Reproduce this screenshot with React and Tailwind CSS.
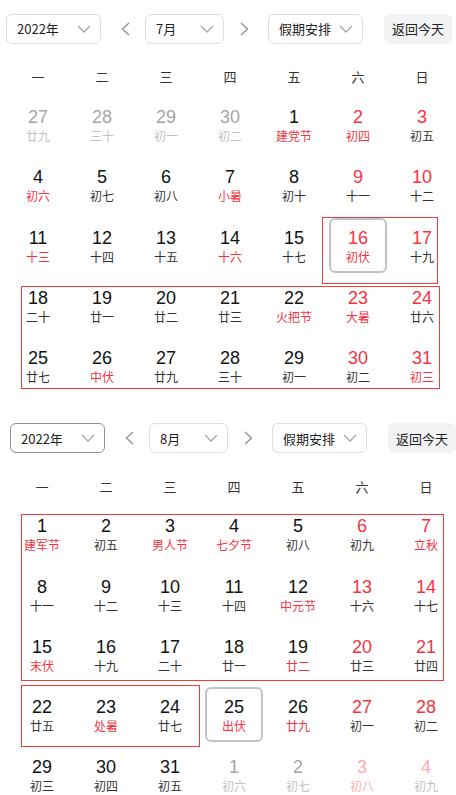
import React from 'react';

const CJK = "font-['Noto_Sans_CJK_SC',sans-serif]";
const NUM = "font-['Liberation_Sans',Arial,sans-serif]";

const numColor = {
  k: 'text-[#111]',
  r: 'text-[#f5333f]',
  g: 'text-[#a6a6a6]',
  p: 'text-[#ffabab]',
};

const lunarColor = {
  k: 'text-[#333]',
  r: 'text-[#f5333f]',
  g: 'text-[#c2c2c2]',
  p: 'text-[#ffb0b0]',
};

// "day lunar colors[*]" — colors: number then lunar, * marks the picked day
const parse = (rows) =>
  rows.map((s) => {
    const [day, lunar, c = 'kk'] = s.split(' ');
    return { day, lunar, n: c[0], l: c[1], picked: c[2] === '*' };
  });

const july = parse([
  '27 廿九 gg', '28 三十 gg', '29 初一 gg', '30 初二 gg', '1 建党节 kr', '2 初四 rr', '3 初五 rk',
  '4 初六 kr', '5 初七', '6 初八', '7 小暑 kr', '8 初十', '9 十一 rk', '10 十二 rk',
  '11 十三 kr', '12 十四', '13 十五', '14 十六 kr', '15 十七', '16 初伏 rr*', '17 十九 rk',
  '18 二十', '19 廿一', '20 廿二', '21 廿三', '22 火把节 kr', '23 大暑 rr', '24 廿六 rk',
  '25 廿七', '26 中伏 kr', '27 廿九', '28 三十', '29 初一', '30 初二 rk', '31 初三 rr',
]);

const august = parse([
  '1 建军节 kr', '2 初五', '3 男人节 kr', '4 七夕节 kr', '5 初八', '6 初九 rk', '7 立秋 rr',
  '8 十一', '9 十二', '10 十三', '11 十四', '12 中元节 kr', '13 十六 rk', '14 十七 rk',
  '15 末伏 kr', '16 十九', '17 二十', '18 廿一', '19 廿二 kr', '20 廿三 rk', '21 廿四 rk',
  '22 廿五', '23 处暑 kr', '24 廿七', '25 出伏 kr*', '26 廿九 kr', '27 初一 rk', '28 初二 rk',
  '29 初三', '30 初四', '31 初五', '1 初六 gg', '2 初七 gg', '3 初八 pp', '4 初九 pg',
]);

const weekdays = ['一', '二', '三', '四', '五', '六', '日'];

const ChevronDown = () => (
  <svg width="14" height="8" viewBox="0 0 14 8" fill="none">
    <path d="M1 1l6 6 6-6" stroke="#a3a6b4" strokeWidth="1.3" />
  </svg>
);

const Arrow = ({ dir }) => (
  <svg width="9" height="14" viewBox="0 0 9 14" fill="none">
    <path
      d={dir === 'left' ? 'M8 1L1.5 7 8 13' : 'M1 1l6.5 6L1 13'}
      stroke="#8f929c"
      strokeWidth="1.4"
    />
  </svg>
);

const Select = ({ label, width, dark }) => (
  <div
    className={`${width} h-[30px] shrink-0 rounded-[6px] border bg-white flex items-center justify-between pl-[10px] pr-[9px] ${
      dark ? 'border-[#8e909c]' : 'border-[#dcdde3]'
    }`}
  >
    <span className={`${CJK} text-[13px] text-[#222]`}>{label}</span>
    <ChevronDown />
  </div>
);

const Toolbar = ({ month, darkYear }) => (
  <div className="flex items-center h-[30px]">
    <Select label="2022年" width="w-[95px]" dark={darkYear} />
    <div className="ml-[20px] mr-[15px] flex">
      <Arrow dir="left" />
    </div>
    <Select label={month} width="w-[79px]" />
    <div className="ml-[16px] mr-[19px] flex">
      <Arrow dir="right" />
    </div>
    <Select label="假期安排" width="w-[95px]" />
    <button
      className={`${CJK} ml-[21px] w-[68px] h-[30px] shrink-0 rounded-[6px] bg-[#f3f3f5] text-[13px] text-[#222]`}
    >
      返回今天
    </button>
  </div>
);

const DayCell = ({ d }) => (
  <div className="h-[60.25px] px-[3px] pt-[2px]">
    <div
      className={`h-[55px] flex flex-col items-center pt-[7px] rounded-[6px] border-2 ${
        d.picked ? 'border-[#c0c3cc]' : 'border-transparent'
      }`}
    >
      <span className={`${NUM} text-[18px] leading-[22px] ${numColor[d.n]}`}>{d.day}</span>
      <span className={`${CJK} text-[12px] leading-[16px] ${lunarColor[d.l]}`}>{d.lunar}</span>
    </div>
  </div>
);

const Marker = ({ className }) => (
  <div className={`absolute border border-[#f23c3c] pointer-events-none ${className}`} />
);

const Calendar = ({ month, days, offset, darkYear, markers }) => (
  <div className={`relative pt-[14px] pb-[13px] ${offset}`}>
    <Toolbar month={month} darkYear={darkYear} />
    <div className="grid grid-cols-[repeat(7,64px)] mt-[15px] h-[36px] items-center">
      {weekdays.map((w) => (
        <div key={w} className={`${CJK} text-center text-[13px] text-[#333]`}>
          {w}
        </div>
      ))}
    </div>
    <div className="grid grid-cols-[repeat(7,64px)]">
      {days.map((d, i) => (
        <DayCell key={i} d={d} />
      ))}
    </div>
    {markers}
  </div>
);

export default function App() {
  return (
    <div className="w-[456px] h-[795px] overflow-hidden bg-white">
      <Calendar
        month="7月"
        days={july}
        offset="pl-[6px]"
        markers={
          <>
            <Marker className="left-[322px] top-[217px] w-[116px] h-[67px]" />
            <Marker className="left-[21px] top-[286px] w-[419px] h-[103px]" />
          </>
        }
      />
      <Calendar
        month="8月"
        days={august}
        offset="pl-[10px]"
        darkYear
        markers={
          <>
            <Marker className="left-[21px] top-[105px] w-[423px] h-[167px]" />
            <Marker className="left-[21px] top-[276px] w-[179px] h-[62px]" />
          </>
        }
      />
    </div>
  );
}
